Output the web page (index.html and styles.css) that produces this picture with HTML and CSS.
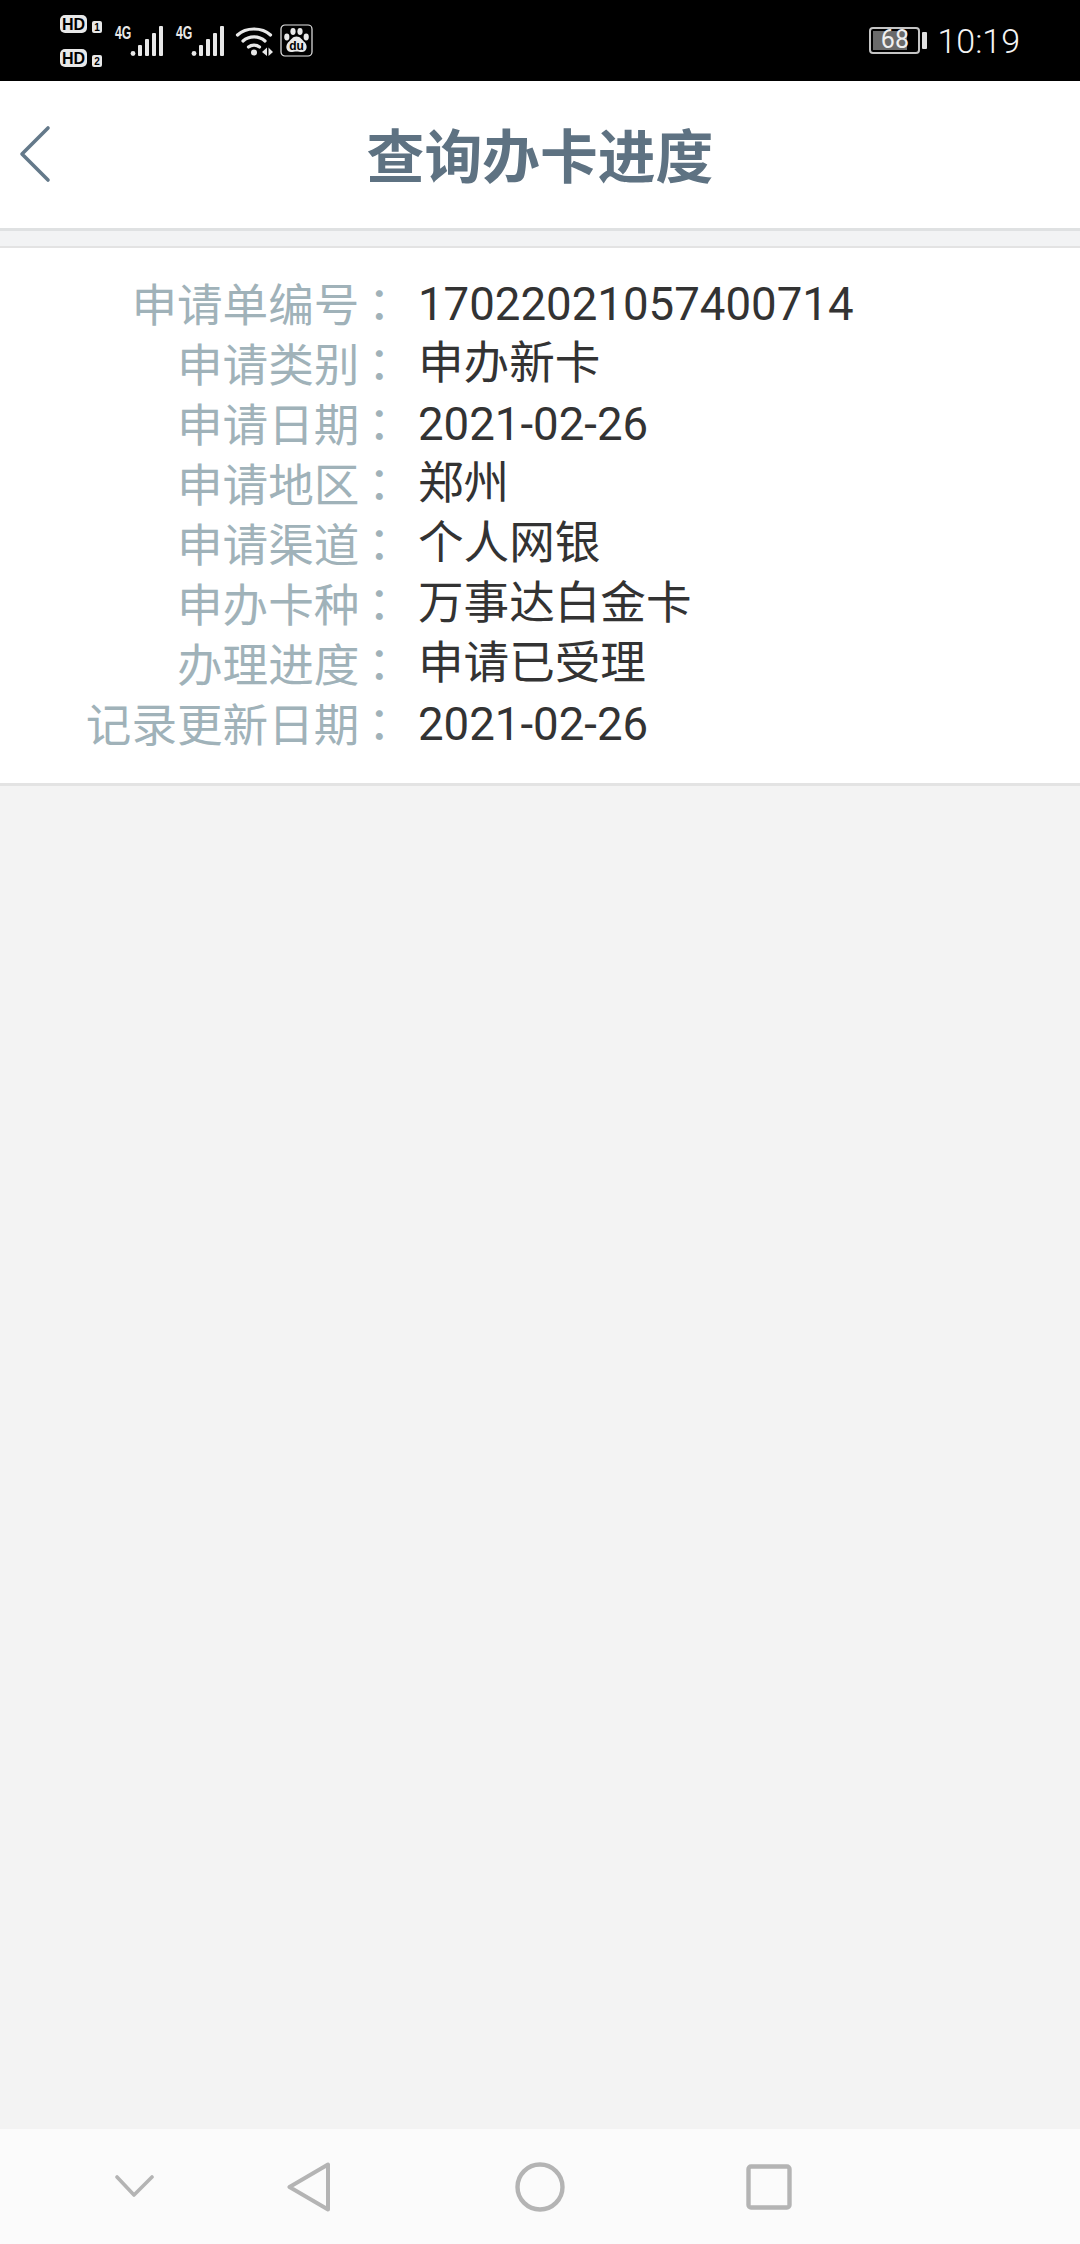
FILE: index.html
```html
<!DOCTYPE html>
<html lang="zh-CN">
<head>
<meta charset="utf-8">
<title>查询办卡进度</title>
<link rel="stylesheet" href="styles.css">
</head>
<body>
<div class="page">
  <div class="status">
    <div class="sims">
      <svg class="sim" width="44" height="20" viewBox="0 0 44 20">
        <rect x="1" y="1" width="27" height="18" rx="5" fill="#e8e8e8"/>
        <text x="14.5" y="15.5" class="hd">HD</text>
        <rect x="33" y="7" width="10" height="12" rx="2" fill="#e8e8e8"/>
        <text x="38" y="17" class="simnum">1</text>
      </svg>
      <svg class="sim" width="44" height="20" viewBox="0 0 44 20">
        <rect x="1" y="1" width="27" height="18" rx="5" fill="#e8e8e8"/>
        <text x="14.5" y="15.5" class="hd">HD</text>
        <rect x="33" y="7" width="10" height="12" rx="2" fill="#e8e8e8"/>
        <text x="38" y="17" class="simnum">2</text>
      </svg>
    </div>
    <svg class="signal" width="50" height="32" viewBox="0 0 50 32">
      <text transform="translate(0 14) scale(.68 1)" class="net">4G</text>
      <g fill="#e8e8e8">
        <circle cx="18" cy="28.5" r="2.4"/>
        <rect x="23" y="20" width="4" height="11" rx="1"/>
        <rect x="30" y="14" width="4" height="17" rx="1"/>
        <rect x="37" y="8" width="4" height="23" rx="1"/>
        <rect x="44" y="1" width="4" height="30" rx="1"/>
      </g>
    </svg>
    <svg class="signal second" width="50" height="32" viewBox="0 0 50 32">
      <text transform="translate(0 14) scale(.68 1)" class="net">4G</text>
      <g fill="#e8e8e8">
        <circle cx="18" cy="28.5" r="2.4"/>
        <rect x="23" y="20" width="4" height="11" rx="1"/>
        <rect x="30" y="14" width="4" height="17" rx="1"/>
        <rect x="37" y="8" width="4" height="23" rx="1"/>
        <rect x="44" y="1" width="4" height="30" rx="1"/>
      </g>
    </svg>
    <svg class="wifi" width="37" height="30" viewBox="0 0 37 30">
      <g fill="none" stroke="#e8e8e8" stroke-width="3.2" stroke-linecap="round">
        <path d="M1.5 9 C10 1 26 1 34.5 9"/>
        <path d="M7 15 C13 9.5 23 9.5 29 15"/>
        <path d="M12.5 21 C15.5 18.5 20.5 18.5 23.5 21"/>
      </g>
      <circle cx="18" cy="26.5" r="3" fill="#e8e8e8"/>
      <path d="M26 26 L31 21.5 V30 Z M32.5 21.5 L37 26 L32.5 30 Z" fill="#e8e8e8"/>
    </svg>
    <svg class="baidu" width="33" height="33" viewBox="0 0 33 33">
      <rect x="1" y="1" width="31" height="31" rx="4" fill="none" stroke="#e8e8e8" stroke-width="1.2"/>
      <g fill="#e8e8e8">
        <ellipse cx="6.8" cy="13" rx="2.6" ry="3.4"/>
        <ellipse cx="13" cy="7.5" rx="2.6" ry="3.4"/>
        <ellipse cx="20" cy="7.5" rx="2.6" ry="3.4"/>
        <ellipse cx="26.2" cy="13" rx="2.6" ry="3.4"/>
        <path d="M16.5 12.5 C20.5 12.5 21.5 15.5 25 18.5 C28.5 23 26 28 22 28 C20 28 18.5 27.4 16.5 27.4 C14.5 27.4 13 28 11 28 C7 28 4.5 23 8 18.5 C11.5 15.5 12.5 12.5 16.5 12.5 Z"/>
      </g>
      <text x="16.5" y="25.5" class="du">du</text>
    </svg>
    <div class="status-right">
      <div class="battery">
        <div class="battery-body">
          <div class="battery-fill"></div>
          <span class="battery-num">68</span>
        </div>
        <div class="battery-nub"></div>
      </div>
      <span class="time">10:19</span>
    </div>
  </div>

  <header class="topbar">
    <svg class="back" width="32" height="58" viewBox="0 0 32 58">
      <path d="M29 3 L3 29 L29 55" fill="none" stroke="#64798a" stroke-width="3.6" stroke-linecap="round" stroke-linejoin="round"/>
    </svg>
    <h1 class="title">查询办卡进度</h1>
  </header>
  <div class="spacer"></div>

  <section class="card">
    <div class="row"><span class="label">申请单编号<span class="colon" lang="zh-Hant">：</span></span><span class="value num">17022021057400714</span></div>
    <div class="row"><span class="label">申请类别<span class="colon" lang="zh-Hant">：</span></span><span class="value">申办新卡</span></div>
    <div class="row"><span class="label">申请日期<span class="colon" lang="zh-Hant">：</span></span><span class="value num">2021-02-26</span></div>
    <div class="row"><span class="label">申请地区<span class="colon" lang="zh-Hant">：</span></span><span class="value">郑州</span></div>
    <div class="row"><span class="label">申请渠道<span class="colon" lang="zh-Hant">：</span></span><span class="value">个人网银</span></div>
    <div class="row"><span class="label">申办卡种<span class="colon" lang="zh-Hant">：</span></span><span class="value">万事达白金卡</span></div>
    <div class="row"><span class="label">办理进度<span class="colon" lang="zh-Hant">：</span></span><span class="value">申请已受理</span></div>
    <div class="row"><span class="label">记录更新日期<span class="colon" lang="zh-Hant">：</span></span><span class="value num">2021-02-26</span></div>
  </section>

  <div class="fill"></div>

  <nav class="navbar">
    <svg width="40" height="22" viewBox="0 0 40 22"><path d="M2 2 L19 20 L37 2" fill="none" stroke="#b4b4b4" stroke-width="3.6" stroke-linecap="round" stroke-linejoin="round"/></svg>
    <svg width="44" height="50" viewBox="0 0 44 50"><path d="M41 2.5 V47.5 L2.5 25 Z M41 2.5 L2.5 25 L41 47.5" fill="none" stroke="#b4b4b4" stroke-width="4" stroke-linejoin="round"/></svg>
    <svg width="50" height="50" viewBox="0 0 50 50"><circle cx="25" cy="25" r="22.5" fill="none" stroke="#b4b4b4" stroke-width="4.4"/></svg>
    <svg width="46" height="46" viewBox="0 0 46 46"><rect x="2.5" y="2.5" width="41" height="41" rx="2.5" fill="none" stroke="#b4b4b4" stroke-width="4.4"/></svg>
  </nav>
</div>
</body>
</html>
```

FILE: styles.css
```css
* { box-sizing: border-box; }
html, body { margin: 0; padding: 0; }
body {
  background: #f3f3f3;
  font-family: Roboto, "Noto Sans CJK SC", sans-serif;
}
.page {
  width: 1080px;
  height: 2244px;
  display: flex;
  flex-direction: column;
}

/* status bar */
.status {
  height: 81px;
  flex: none;
  background: #000;
  display: flex;
  align-items: center;
  padding: 0 60px 0 59px;
}
.status svg { overflow: visible; }
.sims { display: flex; flex-direction: column; gap: 14px; }
.sim { display: block; }
.signal { margin-left: 12px; }
.signal.second { margin-left: 11px; }
.wifi { margin-left: 10px; }
.baidu { margin-left: 7px; }
.hd {
  font: 700 16px "Liberation Sans", sans-serif;
  fill: #000;
  text-anchor: middle;
}
.simnum {
  font: 700 10px "Liberation Sans", sans-serif;
  fill: #000;
  text-anchor: middle;
}
.net {
  font: 700 18px "Liberation Sans", sans-serif;
  fill: #e8e8e8;
}
.du {
  font: 700 12px "Liberation Sans", sans-serif;
  fill: #000;
  text-anchor: middle;
}
.status-right {
  margin-left: auto;
  display: flex;
  align-items: center;
  gap: 10px;
}
.battery { display: flex; align-items: center; gap: 2px; }
.battery-body {
  position: relative;
  width: 51px;
  height: 27px;
  border: 2px solid #c4c4c4;
  border-radius: 4px;
  padding: 2px;
}
.battery-fill { width: 34px; height: 100%; background: #6a6a6a; }
.battery-num {
  position: absolute;
  inset: 0;
  text-align: center;
  font-size: 25px;
  line-height: 22px;
  font-weight: 400;
  color: #f0f0f0;
}
.battery-nub { width: 5px; height: 17px; background: #e0e0e0; border-radius: 1px; }
.time {
  font-size: 34px;
  font-weight: 300;
  color: #f4f4f4;
  line-height: 1;
}

/* title bar */
.topbar {
  height: 150px;
  flex: none;
  background: #fff;
  border-bottom: 3px solid #dfe1e2;
  position: relative;
  display: flex;
  align-items: center;
  justify-content: center;
}
.back { position: absolute; left: 19px; top: 44px; }
.title {
  margin: 0;
  font-family: "Noto Sans CJK SC", sans-serif;
  font-size: 57.8px;
  font-weight: 700;
  color: #5e7282;
  line-height: 1;
  padding-bottom: 2px;
}
.spacer { height: 15px; flex: none; background: #f2f3f4; }

/* details */
.card {
  flex: none;
  height: 540px;
  background: #fff;
  border-top: 2px solid #e3e3e3;
  border-bottom: 3px solid #e3e3e3;
  padding-top: 24px;
}
.row {
  height: 60px;
  display: grid;
  grid-template-columns: 405px 1fr;
  column-gap: 13px;
  align-items: center;
  font-size: 45.6px;
  line-height: 60px;
}
.label {
  text-align: right;
  color: #a0b2b9;
  font-family: "Noto Sans CJK SC", sans-serif;
  white-space: nowrap;
  padding-bottom: 4px;
}
.colon {
  font-family: "Noto Sans CJK TC", sans-serif;
  margin-left: -3px;
  margin-right: 3px;
}
.value { color: #333; white-space: nowrap; }
.num { padding-top: 2px; }

.fill { flex: 1; background: #f3f3f3; }

/* navigation bar */
.navbar {
  height: 115px;
  flex: none;
  background: #fbfbfb;
  display: flex;
  align-items: center;
  padding: 0 0 0 115px;
}
.navbar svg:nth-child(1) { margin-right: 131.5px; margin-top: -2px; }
.navbar svg:nth-child(2) { margin-right: 184.5px; }
.navbar svg:nth-child(3) { margin-right: 180.5px; }
```
